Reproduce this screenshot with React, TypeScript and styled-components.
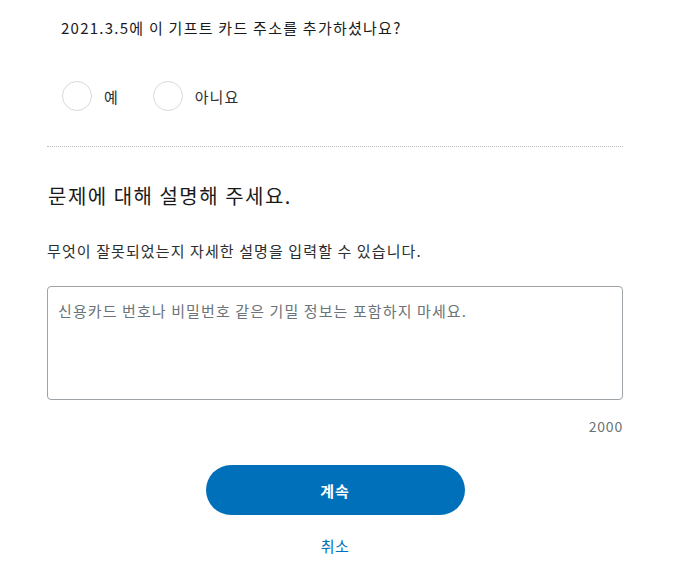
import styled, { createGlobalStyle } from "styled-components";

const GlobalStyle = createGlobalStyle`
  body {
    margin: 0;
    background: #ffffff;
    font-family: "Noto Sans CJK KR", "Noto Sans", sans-serif;
    color: #2c2e2f;
  }
`;

const Page = styled.div`
  width: 576px;
  padding: 18px 0 0 47px;
  display: flex;
  flex-direction: column;
`;

const Question = styled.p`
  margin: 0 0 0 14px;
  font-size: 15px;
  letter-spacing: 1.25px;
  line-height: 20px;
  color: #1a1a1a;
`;

const RadioRow = styled.div`
  display: flex;
  align-items: center;
  gap: 34px;
  margin: 43px 0 0 15px;
`;

const RadioLabel = styled.label`
  display: flex;
  align-items: center;
  gap: 12px;
  font-size: 15px;
  letter-spacing: 1px;
  color: #2c2e2f;
  cursor: pointer;
`;

const Circle = styled.span`
  width: 28px;
  height: 28px;
  border: 1px solid #d9d9d9;
  border-radius: 50%;
  background: #fff;
`;

const Divider = styled.hr`
  margin: 35px 0 0 0;
  border: 0;
  border-top: 1px dotted #b7bcbf;
  width: 100%;
`;

const Heading = styled.h2`
  margin: 35px 0 0 1px;
  font-size: 20px;
  letter-spacing: 1.5px;
  font-weight: 400;
  line-height: 28px;
  color: #1a1a1a;
`;

const Hint = styled.p`
  margin: 31px 0 0 0;
  font-size: 15px;
  letter-spacing: 1.1px;
  line-height: 20px;
  color: #2c2e2f;
`;

const TextArea = styled.textarea`
  margin-top: 25px;
  box-sizing: border-box;
  width: 576px;
  height: 114px;
  border: 1px solid #9da3a6;
  border-radius: 4px;
  padding: 14px 10px;
  font-family: "Noto Sans CJK KR", "Noto Sans", sans-serif;
  font-size: 15px;
  letter-spacing: 1.1px;
  line-height: 20px;
  resize: none;
  outline: none;
  &::placeholder {
    color: #6c7378;
  }
`;

const Counter = styled.div`
  margin-top: 16px;
  text-align: right;
  font-size: 14px;
  letter-spacing: 0.8px;
  line-height: 20px;
  color: #6c7378;
`;

const Actions = styled.div`
  display: flex;
  flex-direction: column;
  align-items: center;
  margin-top: 29px;
`;

const PrimaryButton = styled.button`
  width: 259px;
  height: 50px;
  border: 0;
  border-radius: 25px;
  background: #0070ba;
  color: #fff;
  font-family: "Noto Sans CJK KR", "Noto Sans", sans-serif;
  font-size: 15px;
  letter-spacing: 1px;
  font-weight: 700;
  cursor: pointer;
`;

const LinkButton = styled.a`
  margin-top: 21px;
  font-size: 15px;
  letter-spacing: 0.5px;
  line-height: 20px;
  color: #0070ba;
  text-decoration: none;
  cursor: pointer;
`;

export default function App() {
  return (
    <>
      <GlobalStyle />
      <Page>
        <Question>2021.3.5에 이 기프트 카드 주소를 추가하셨나요?</Question>
        <RadioRow>
          <RadioLabel>
            <Circle />
            예
          </RadioLabel>
          <RadioLabel>
            <Circle />
            아니요
          </RadioLabel>
        </RadioRow>
        <Divider />
        <Heading>문제에 대해 설명해 주세요.</Heading>
        <Hint>무엇이 잘못되었는지 자세한 설명을 입력할 수 있습니다.</Hint>
        <TextArea placeholder="신용카드 번호나 비밀번호 같은 기밀 정보는 포함하지 마세요." />
        <Counter>2000</Counter>
        <Actions>
          <PrimaryButton>계속</PrimaryButton>
          <LinkButton>취소</LinkButton>
        </Actions>
      </Page>
    </>
  );
}
